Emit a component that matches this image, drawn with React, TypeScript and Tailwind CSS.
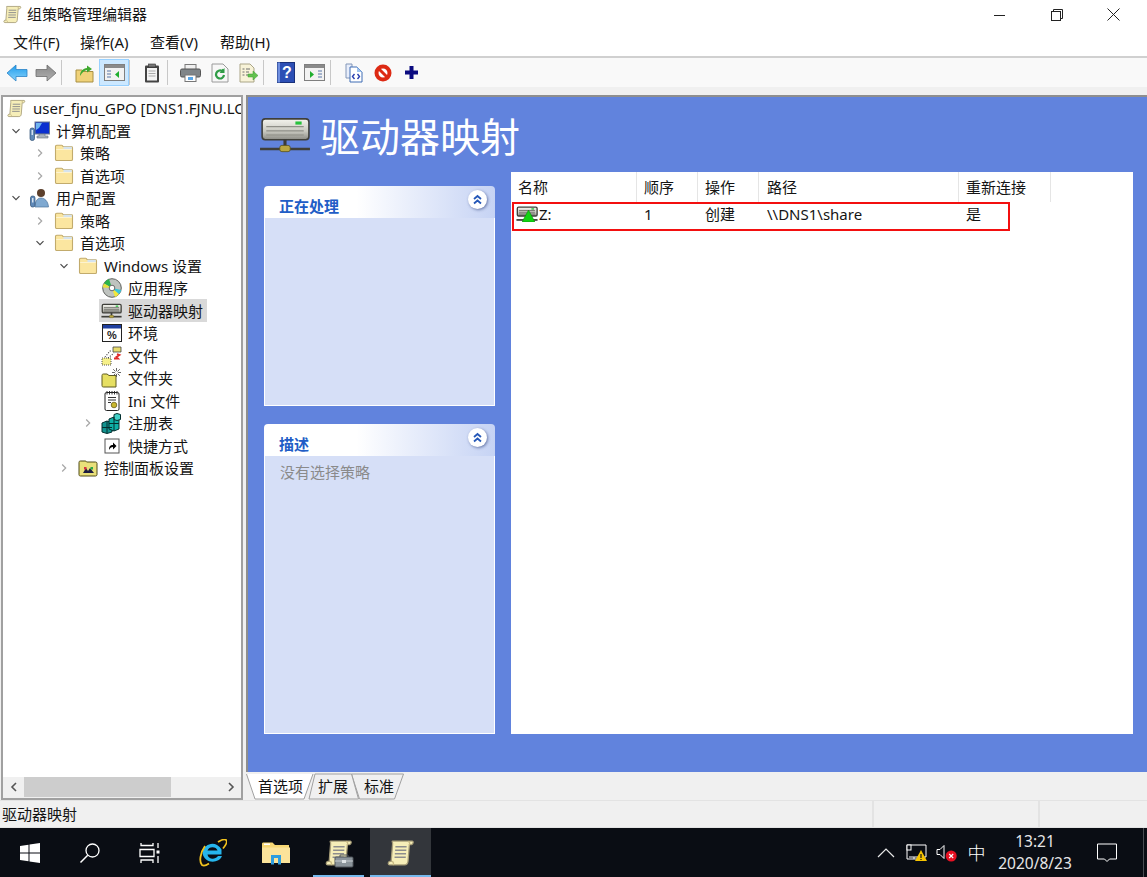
import React from "react";

const Scroll = ({ s = 20 }: { s?: number }) => (
  <svg width={s} height={s} viewBox="0 0 20 20" className="shrink-0">
    <path d="M4 1.500h14c1 0 1 2-.5 2.500H16L15 16c-.2 1.600-1 2.500-2.500 2.500H2c-1.400 0-1.600-2 0-2.500h1L4 3.500C4.100 2.300 3.300 1.500 4 1.500z" fill="#f6eeb8" stroke="#a79d78" strokeWidth="0.900" />
    <path d="M6 5.500h8M5.800 8h8M5.600 10.500h8M5.400 13h8" stroke="#8d8d8d" strokeWidth="1" />
    <path d="M15 1.700c1.500.5 1.500 1.800.8 2.600M3.500 16c1.400.5 1.400 1.800.6 2.500" stroke="#c9bb85" fill="none" strokeWidth="1" />
  </svg>
);

const Folder = () => (
  <svg width="20" height="18" viewBox="0 0 20 18" className="shrink-0">
    <path d="M1.500 4V2.500c0-.8.500-1.200 1.200-1.200h5c.7 0 1 .4 1.300 1.200h8.300c.7 0 1.200.4 1.200 1.200v11.500c0 .8-.5 1.300-1.200 1.300H2.700c-.7 0-1.200-.5-1.200-1.300z" fill="#fbe6a0" stroke="#c2ab6c" strokeWidth="1.100" />
    <path d="M9.500 2.600h8.300v2.400H9.500z" fill="#d5e3ee" />
    <path d="M2.200 5.500h15.600" stroke="#fdf3cf" strokeWidth="1" />
  </svg>
);

const Drive = ({ w = 22, h = 16, small }: { w?: number; h?: number; small?: boolean }) => (
  <svg width={w} height={h} viewBox="0 0 50 34" className="shrink-0">
    <defs>
      <linearGradient id="drv" x1="0" y1="0" x2="0" y2="1">
        <stop offset="0" stopColor="#f4f4ee" />
        <stop offset="0.6" stopColor="#c8c8c0" />
        <stop offset="1" stopColor="#8b8b85" />
      </linearGradient>
    </defs>
    <rect x="3" y="1.500" width="45" height="20" rx="3" fill="url(#drv)" stroke="#3f3f3a" strokeWidth={small ? 3 : 1.500} />
    <path d="M7 9h36M7 13h36M7 17h36" stroke={small ? "#6c6c66" : "#8f8f88"} strokeWidth={small ? 2 : 1.200} />
    <rect x="35" y="4" width="6" height="3" fill="#27c23d" />
    <path d="M25 21v9" stroke="#3c3c38" strokeWidth={small ? 4 : 3} />
    <path d="M1 30.500h48" stroke="#3f3f3a" strokeWidth={small ? 4 : 2.500} />
    <rect x="20" y="27" width="10" height="6" rx="2" fill="#b9a640" stroke="#5a5220" strokeWidth="0.800" />
  </svg>
);

const Computer = () => (
  <svg width="21" height="20" viewBox="0 0 21 20" className="shrink-0">
    <rect x="6" y="1" width="14.500" height="12" fill="#0a2fd0" stroke="#6d7a8f" />
    <path d="M7 2h6l-3 5-3 2z" fill="#6fb4ee" />
    <path d="M10 13h6v2h3v2H8v-2h2z" fill="#a8b2bd" stroke="#67717d" strokeWidth="0.600" />
    <rect x="1" y="7" width="4.500" height="12.500" rx="2" fill="#5f89b8" stroke="#2d4d72" strokeWidth="0.700" />
    <rect x="2.600" y="9" width="1.300" height="5" fill="#e5eef7" />
  </svg>
);

const UserIcon = () => (
  <svg width="21" height="20" viewBox="0 0 21 20" className="shrink-0">
    <circle cx="12" cy="5" r="4" fill="#5c3f2b" />
    <path d="M6 19c0-6 2.500-9 6-9s7 3 7.500 9z" fill="#7fa9d1" stroke="#4b739c" strokeWidth="0.700" />
    <rect x="1.500" y="8" width="4.500" height="11" rx="2" fill="#5f89b8" stroke="#2d4d72" strokeWidth="0.700" />
    <rect x="3.100" y="10" width="1.300" height="4.500" fill="#e5eef7" />
  </svg>
);

const Cd = () => (
  <svg width="20" height="20" viewBox="0 0 20 20" className="shrink-0">
    <circle cx="10" cy="10" r="9.300" fill="#bfc3bf" stroke="#5f615e" />
    <path d="M10 10L2 5.500a9 9 0 0 1 5-4.500z" fill="#2bb34a" />
    <path d="M10 10L2 5.500a9 9 0 0 0-1.300 4z" fill="#e8e23a" />
    <path d="M10 10l3 9a9 9 0 0 0 4-3z" fill="#f2e83a" />
    <path d="M10 10l7 6a9 9 0 0 0 2.300-4z" fill="#39c6d8" />
    <circle cx="10" cy="10" r="2.800" fill="#fff" stroke="#6a6a6a" />
  </svg>
);

const EnvIcon = () => (
  <svg width="20" height="18" viewBox="0 0 20 18" className="shrink-0">
    <rect x="0.500" y="0.500" width="19" height="17" fill="#fff" stroke="#222" />
    <rect x="1" y="1" width="18" height="3.500" fill="#1f3f9f" />
    <text x="10" y="15" textAnchor="middle" fontSize="11" fontWeight="700" fontFamily="Liberation Sans" fill="#222">%</text>
  </svg>
);

const FileSpark = () => (
  <svg width="21" height="20" viewBox="0 0 21 20" className="shrink-0">
    <path d="M12 1h8v5h-8z" fill="#e8dc6c" stroke="#444" strokeWidth="0.800" />
    <path d="M1 12h9v7H1z" fill="#f6f08a" stroke="#444" strokeWidth="0.900" strokeDasharray="1 1" />
    <path d="M4 11l6-7M7 12l6-5" stroke="#333" strokeWidth="1.100" strokeDasharray="1 1.500" />
    <path d="M16 8l2.500 1-3 2 1.500 1.500h-4" stroke="#e02a2a" strokeWidth="1.800" fill="none" />
  </svg>
);

const FolderSpark = () => (
  <svg width="21" height="20" viewBox="0 0 21 20" className="shrink-0">
    <path d="M1 7.500C1 6.500 1.600 6 2.300 6H6L8 7.500h7V19H2.300C1.500 19 1 18.500 1 17.500z" fill="#e6df62" stroke="#5f5b20" strokeWidth="1" />
    <path d="M15.500 0v9M11 4.500h9M12.200 1.200l6.600 6.600M18.800 1.200l-6.600 6.600" stroke="#555" strokeWidth="0.900" />
    <circle cx="15.500" cy="4.500" r="1.600" fill="#fff" />
  </svg>
);

const IniIcon = () => (
  <svg width="18" height="21" viewBox="0 0 18 21" className="shrink-0">
    <rect x="2" y="2.500" width="14" height="18" rx="1.500" fill="#fff" stroke="#222" />
    <path d="M4 1v3.500M6.500 1v3.500M9 1v3.500M11.500 1v3.500M14 1v3.500" stroke="#222" strokeWidth="0.900" />
    <path d="M5 7.500h8M5 10h8M5 12.500h3" stroke="#333" strokeWidth="1" />
    <circle cx="11" cy="15" r="2.800" fill="#c9b72e" stroke="#5a4e10" strokeWidth="0.700" />
  </svg>
);

const Registry = () => (
  <svg width="21" height="21" viewBox="0 0 21 21" className="shrink-0">
    <path d="M1 10l5-2 5 2v9l-5 1.500L1 19z" fill="#11938f" stroke="#042f2f" strokeWidth="1" />
    <path d="M8 6l5-2 5 2v10l-5 2-5-2z" fill="#0fb0a6" stroke="#042f2f" strokeWidth="1" />
    <path d="M13 1.500l3-1 3.500 1v5l-3.500 1-3-1z" fill="#43d1c8" stroke="#042f2f" strokeWidth="1" />
    <path d="M1 14.500h10M6 8v12M8 10.500h10M13 4v14" stroke="#042f2f" strokeWidth="1" />
  </svg>
);

const Shortcut = () => (
  <svg width="16" height="16" viewBox="0 0 16 16" className="shrink-0">
    <rect x="1" y="1" width="14" height="14" fill="#fff" stroke="#555" />
    <path d="M5 12c0-3.500 1-5 4-5V4.500l3.500 3.500L9 11.500V9c-1.800 0-3 1-4 3z" fill="#000" />
  </svg>
);

const PanelFolder = () => (
  <svg width="20" height="18" viewBox="0 0 20 18" className="shrink-0">
    <path d="M1 3.500C1 2.500 1.500 2 2.300 2h5c.8 0 1 .5 1.300 1H17.500c.8 0 1.500.5 1.500 1.300v11.400c0 .8-.7 1.300-1.500 1.300h-15C1.700 17 1 16.500 1 15.700z" fill="#e9e07a" stroke="#4f4a18" />
    <path d="M5 14l3-5 2 3 2-3 4 5z" fill="#1c1c40" />
    <rect x="6" y="8" width="2.500" height="2.500" fill="#d9303f" />
    <rect x="12.500" y="8" width="2.500" height="2.500" fill="#2ba84a" />
  </svg>
);

const Chevron = ({ open }: { open: boolean }) => (
  <svg width="12" height="12" viewBox="0 0 12 12" className="shrink-0">
    {open ? (
      <path d="M2.500 4.200L6 7.700l3.500-3.500" fill="none" stroke="#4a4a4a" strokeWidth="1.200" />
    ) : (
      <path d="M4.200 2.500L7.700 6l-3.500 3.500" fill="none" stroke="#a6a6a6" strokeWidth="1.200" />
    )}
  </svg>
);

const LEVEL = ["pl-[1px]", "pl-[7px]", "pl-[31px]", "pl-[55px]", "pl-[79px]"];

const Row = ({ level, chev, icon, label, selected }: { level: number; chev?: "o" | "c"; icon: React.ReactNode; label: string; selected?: boolean }) => (
  <div className={`flex items-center h-[22.5px] whitespace-nowrap ${LEVEL[level]}`}>
    {level > 0 && (
      <span className="w-[12px] mr-[5px] shrink-0 flex items-center">{chev ? <Chevron open={chev === "o"} /> : null}</span>
    )}
    <span className={`flex items-center h-[23px] pl-[2px] pr-[4px] ${selected ? "bg-[#d9d9d9]" : ""}`}>
      <span className="w-[21px] flex justify-center shrink-0">{icon}</span>
      <span className="ml-[6px]">{label}</span>
    </span>
  </div>
);

const Arrow = ({ left, a, b, line }: { left?: boolean; a: string; b: string; line: string }) => (
  <svg width="22" height="18" viewBox="0 0 22 18">
    <defs>
      <linearGradient id={a.slice(1)} x1="0" y1="0" x2="0" y2="1">
        <stop offset="0" stopColor={a} />
        <stop offset="1" stopColor={b} />
      </linearGradient>
    </defs>
    <path d={left ? "M1 9l9-8v4.500h11v7H10V17z" : "M21 9l-9-8v4.500H1v7h11V17z"} fill={`url(#${a.slice(1)})`} stroke={line} strokeWidth="0.800" />
  </svg>
);

const Btn = ({ children, active }: { children: React.ReactNode; active?: boolean }) => (
  <div className={`h-[27px] flex items-center justify-center shrink-0 ${active ? "w-[30px] bg-[#cce8ff] border border-[#99d1ff]" : "w-[29px]"}`}>{children}</div>
);
const Sep = ({ tight }: { tight?: boolean }) => (
  <div className={`w-px h-[25px] bg-[#c8c8c8] shrink-0 ${tight ? "mr-[7px]" : "ml-px mr-[8px]"}`} />
);

const WinIcon = ({ flip }: { flip?: boolean }) => (
  <svg width="21" height="17" viewBox="0 0 21 17">
    <rect x="0.500" y="0.500" width="20" height="16" fill="#f2f2f2" stroke="#7f7f7f" />
    <rect x="1" y="1" width="19" height="3" fill="#8a8a8a" />
    {flip ? (
      <>
        <path d="M6 7v7l4-3.500z" fill="#1fae2e" />
        <path d="M14 7h4M14 10h4M14 13h4" stroke="#5877a8" strokeWidth="1.200" />
      </>
    ) : (
      <>
        <path d="M3 7h4M3 10h4M3 13h4" stroke="#5877a8" strokeWidth="1.200" />
        <path d="M15 7v7l-4-3.500z" fill="#1fae2e" />
      </>
    )}
  </svg>
);

const Toolbar = () => (
  <div className="h-[29px] bg-[#f9f9f9] flex items-center pl-[2px] shrink-0">
    <Btn><Arrow left a="#1c9bec" b="#8ad3fb" line="#2b83c6" /></Btn>
    <Btn><Arrow a="#8a8a8a" b="#b0b0b0" line="#6d6d6d" /></Btn>
    <Sep />
    <Btn>
      <svg width="19" height="20" viewBox="0 0 19 20">
        <path d="M1 7h6l1.500 1.500H18V19H1z" fill="#f0d279" stroke="#a89044" />
        <path d="M5 13c0-5 3-7.500 7-8V2.500L17 6l-5 3.500V7c-3 .5-5 2.500-7 6z" fill="#3fa92f" />
      </svg>
    </Btn>
    <Btn active><WinIcon /></Btn>
    <Sep tight />
    <Btn>
      <svg width="16" height="20" viewBox="0 0 16 20">
        <rect x="1" y="2.500" width="14" height="17" rx="1" fill="#444" />
        <rect x="3" y="5" width="10" height="12.500" fill="#f4f4f4" />
        <rect x="4.500" y="1" width="7" height="3" fill="#777" stroke="#333" strokeWidth="0.600" />
        <path d="M4.500 8h7M4.500 10.500h7M4.500 13h7" stroke="#aaa" strokeWidth="1" />
      </svg>
    </Btn>
    <Sep />
    <Btn>
      <svg width="21" height="18" viewBox="0 0 21 18">
        <rect x="5" y="0.500" width="11" height="6" fill="#f0f0f0" stroke="#7a7a7a" />
        <rect x="0.500" y="5" width="20" height="8" rx="1.500" fill="#7f8589" stroke="#555" />
        <rect x="5" y="11" width="11" height="6.500" fill="#fff" stroke="#777" />
        <rect x="8" y="13" width="5" height="3" fill="#5aa7e8" />
      </svg>
    </Btn>
    <Btn>
      <svg width="18" height="20" viewBox="0 0 18 20">
        <path d="M1 1h11l5 5v13H1z" fill="#f7f7f7" stroke="#9a9a9a" />
        <path d="M12.500 6.500l-1.500 1.500A4 4 0 1 0 13 12" fill="none" stroke="#2f9c46" strokeWidth="2.200" />
        <path d="M13.500 5v5h-5z" fill="#2f9c46" />
      </svg>
    </Btn>
    <Btn>
      <svg width="20" height="20" viewBox="0 0 20 20">
        <path d="M1 1h10l4 4v14H1z" fill="#f8f3d8" stroke="#aaa587" />
        <path d="M3.500 6h2M7 6h4M3.500 9h2M7 9h3M3.500 12h2M7 12h2" stroke="#6e6e6e" strokeWidth="1" />
        <path d="M9 11h5V8l5 4.500-5 4.500v-3H9z" fill="#62c14e" stroke="#3d9c30" strokeWidth="0.500" />
      </svg>
    </Btn>
    <Sep tight />
    <Btn>
      <svg width="18" height="21" viewBox="0 0 18 21">
        <rect x="0.500" y="0.500" width="17" height="20" fill="#2c4fb5" stroke="#19307a" />
        <rect x="0.500" y="0.500" width="2.500" height="20" fill="#6f8fe0" />
        <text x="10" y="16" textAnchor="middle" fontSize="16" fontWeight="700" fontFamily="Liberation Sans" fill="#fff">?</text>
      </svg>
    </Btn>
    <Btn><WinIcon flip /></Btn>
    <Sep />
    <Btn>
      <svg width="18" height="20" viewBox="0 0 18 20">
        <path d="M1 1h6v14H1z" fill="#e8eefb" stroke="#8296b8" />
        <path d="M5 4h7l5 5v10H5z" fill="#fff" stroke="#3e6db4" />
        <path d="M12 4l5 5h-5z" fill="#9fc3ee" />
        <path d="M9.500 11l-2 2.500 2 2.500M12.500 11l2 2.500-2 2.500" fill="none" stroke="#2a3fb0" strokeWidth="1.400" />
      </svg>
    </Btn>
    <Btn>
      <svg width="18" height="18" viewBox="0 0 18 18">
        <circle cx="9" cy="9" r="6.500" fill="#fff" stroke="#dd2a14" strokeWidth="4" />
        <path d="M4.500 4.500l9 9" stroke="#dd2a14" strokeWidth="3" />
      </svg>
    </Btn>
    <Btn>
      <svg width="13" height="13" viewBox="0 0 13 13">
        <path d="M4.500 0h4v4.500H13v4H8.500V13h-4V8.500H0v-4h4.500z" fill="#0b0b80" />
      </svg>
    </Btn>
  </div>
);

const Collapse = () => (
  <span className="absolute right-[8px] top-[4px] w-[19px] h-[19px] rounded-full bg-white shadow-[1px_1px_3px_rgba(40,60,120,0.6)] flex items-center justify-center">
    <svg width="11" height="11" viewBox="0 0 11 11">
      <path d="M2 5l3.500-3L9 5M2 9.500l3.500-3 3.500 3" fill="none" stroke="#2457b8" strokeWidth="1.800" />
    </svg>
  </span>
);

const Card = ({ title, grow, children }: { title: string; grow?: boolean; children?: React.ReactNode }) => (
  <div className={`flex flex-col ${grow ? "flex-1" : "h-[220px]"}`}>
    <div className="relative h-[32px] rounded-t-[4px] bg-gradient-to-r from-white from-40% to-[#c6d3f4] flex items-end pl-[15px] font-bold text-[#215dc6] leading-[24px] shrink-0">
      {title}
      <Collapse />
    </div>
    <div className="flex-1 bg-[#d6dff7] border-x border-b border-white pl-[15px] pt-[4px] text-[#8a8a8a] leading-[24px]">{children}</div>
  </div>
);

const Tabs = () => (
  <div className="relative h-[28px] flex items-center shrink-0">
    <svg width="170" height="28" viewBox="0 0 170 28" className="absolute left-0 top-0">
      <path d="M105.500 2l8 25h35l9-25z" fill="#f0f0f0" stroke="#a0a0a0" />
      <path d="M63 27l6-25h36.500l7 25z" fill="#f0f0f0" stroke="#a0a0a0" />
      <path d="M0.500 2L9 27h49l9-25" fill="#fff" stroke="#a0a0a0" />
    </svg>
    <span className="relative ml-[12px]">首选项</span>
    <span className="relative ml-[15px]">扩展</span>
    <span className="relative ml-[16px]">标准</span>
  </div>
);

const Main = () => (
  <div className="flex-1 flex flex-col bg-[#6183dd] border-t-2 border-l-2 border-[#8e8e8e] min-h-0">
    <div className="h-[75px] flex items-center pl-[11px] shrink-0">
      <Drive w={52} h={36} />
      <span className="ml-[9px] mt-[4px] text-[40px] leading-[50px] text-white">驱动器映射</span>
    </div>
    <div className="flex-1 flex pb-[38px] pr-[14px] min-h-0">
      <div className="ml-[16px] w-[231px] pt-[14px] flex flex-col gap-[18px] shrink-0">
        <Card title="正在处理" />
        <Card title="描述" grow>没有选择策略</Card>
      </div>
      <div className="ml-[16px] flex-1 bg-white">
        <div className="h-[30px] flex items-center">
          <span className="w-[126px] pl-[7px] h-full flex items-center border-r border-[#e5e5e5]">名称</span>
          <span className="w-[61px] pl-[7px] h-full flex items-center border-r border-[#e5e5e5]">顺序</span>
          <span className="w-[61px] pl-[7px] h-full flex items-center border-r border-[#e5e5e5]">操作</span>
          <span className="w-[200px] pl-[8px] h-full flex items-center border-r border-[#e5e5e5]">路径</span>
          <span className="w-[92px] pl-[7px] h-full flex items-center border-r border-[#e5e5e5]">重新连接</span>
        </div>
        <div className="ml-px w-[498px] h-[29px] border-2 border-[#f30f0f] flex items-center pb-[5px]">
          <span className="w-[122px] pl-[2px] flex items-center">
            <span className="relative w-[22px] h-[16px] shrink-0">
              <Drive w={22} h={16} small />
              <svg width="13" height="12" viewBox="0 0 13 12" className="absolute left-[6px] top-[4px]">
                <path d="M6.500 0L13 12H0z" fill="#12d312" stroke="#0a7a0a" strokeWidth="0.500" />
              </svg>
            </span>
            <span className="ml-px">Z:</span>
          </span>
          <span className="w-[61px] pl-[8px]">1</span>
          <span className="w-[61px] pl-[8px]">创建</span>
          <span className="w-[200px] pl-[9px]">\\DNS1\share</span>
          <span className="pl-[8px]">是</span>
        </div>
      </div>
    </div>
  </div>
);

const Taskbar = () => (
  <div className="h-[49px] bg-[#0a0d14] flex items-stretch text-white shrink-0">
    <div className="w-[60px] flex items-center justify-center">
      <svg width="20" height="20" viewBox="0 0 20 20">
        <path d="M0 3l8.500-1.200v7.700H0zM9.500 1.600L20 0v9.500H9.500zM0 10.500h8.500v7.700L0 17zM9.500 10.500H20V20l-10.500-1.500z" fill="#fff" />
      </svg>
    </div>
    <div className="w-[60px] flex items-center justify-center">
      <svg width="22" height="22" viewBox="0 0 22 22">
        <circle cx="13.500" cy="8.500" r="6.500" fill="none" stroke="#fff" strokeWidth="1.300" />
        <path d="M8.700 13.300L1.500 20.500" stroke="#fff" strokeWidth="1.500" />
      </svg>
    </div>
    <div className="w-[60px] flex items-center justify-center">
      <svg width="22" height="20" viewBox="0 0 22 20">
        <path d="M2 0v2.500h12V0M1 6.500h14v7H1zM2 20v-3h12v3" fill="none" stroke="#fff" strokeWidth="1.300" />
        <path d="M19 0v5" stroke="#fff" strokeWidth="1.300" />
        <rect x="17.500" y="7.500" width="3" height="3" fill="#fff" />
        <path d="M19 13v7" stroke="#fff" strokeWidth="1.300" />
      </svg>
    </div>
    <div className="w-[65px] flex items-center justify-center">
      <svg width="28" height="28" viewBox="0 0 28 28">
        <path d="M3.500 14a10 10 0 0 1 19-3.500v5H8.500c.5 4.500 7 6 10.500 1.500h4c-3 8-18 8-19.500-3z" fill="#26b5ec" />
        <path d="M8.500 11.500h10c-1-4.500-9-4.500-10 0z" fill="#0a0d14" />
        <path d="M6 7C1 14 0 23 3 26c1.500 1 4 .500 7-1.500M19 3c4-2.500 7.500-3 8.500-1.500 1 2-1 5-3.500 8" fill="none" stroke="#f2c21e" strokeWidth="1.800" />
      </svg>
    </div>
    <div className="w-[62px] flex items-center justify-center">
      <svg width="28" height="24" viewBox="0 0 28 24">
        <path d="M0 3c0-1 .5-1.500 1.500-1.500h9L13 4h14v18H1c-.6 0-1-.5-1-1z" fill="#f7d774" />
        <path d="M0 6.500h28V22H1c-.6 0-1-.5-1-1z" fill="#fbe39a" />
        <path d="M2 2.500h6v1.500H2z" fill="#fff" />
        <path d="M9 23.500V14h10v9.500h-3V17h-4v6.500z" fill="#2d9ddf" />
      </svg>
    </div>
    <div className="w-[63px] relative flex items-center justify-center">
      <span className="relative flex">
        <Scroll s={28} />
        <svg width="20" height="14" viewBox="0 0 20 14" className="absolute left-[9px] top-[15px]">
          <rect x="1" y="3" width="18" height="10" rx="1" fill="#8b949b" stroke="#4e555b" />
          <path d="M6 3V1h8v2" fill="none" stroke="#4e555b" />
          <path d="M1 7h18" stroke="#c5cbd0" />
          <rect x="8" y="6" width="4" height="3" fill="#dfe3e6" />
        </svg>
      </span>
      <span className="absolute left-[6px] right-[6px] bottom-0 h-[2px] bg-[#76b9ed]" />
    </div>
    <div className="w-[61px] relative flex items-center justify-center bg-[#33363b]">
      <Scroll s={28} />
      <span className="absolute left-0 right-0 bottom-0 h-[2px] bg-[#76b9ed]" />
    </div>
    <div className="flex-1" />
    <div className="w-[30px] flex items-center justify-center">
      <svg width="18" height="10" viewBox="0 0 18 10"><path d="M1 9l8-8 8 8" fill="none" stroke="#e8e8e8" strokeWidth="1.200" /></svg>
    </div>
    <div className="w-[30px] flex items-center justify-center">
      <svg width="21" height="18" viewBox="0 0 21 18">
        <path d="M1 1h19v12H3M1 1v14M1 15h12M8 13v2" fill="none" stroke="#fff" strokeWidth="1" />
        <rect x="1" y="1" width="4" height="5" fill="#0a0d14" stroke="#fff" strokeWidth="1" />
        <path d="M15 6l6 11H9z" fill="#f7c400" />
        <path d="M15 10v4M15 15v1" stroke="#111" strokeWidth="1.200" />
      </svg>
    </div>
    <div className="w-[31px] flex items-center justify-center">
      <svg width="21" height="18" viewBox="0 0 21 18">
        <path d="M1 5.500h3l4-4v13l-4-4H1z" fill="none" stroke="#fff" strokeWidth="1" />
        <circle cx="15.200" cy="12" r="5.500" fill="#e81123" />
        <path d="M13.200 10l4 4M17.200 10l-4 4" stroke="#fff" strokeWidth="1.100" />
      </svg>
    </div>
    <div className="w-[29px] flex items-center justify-center text-[18px] font-light font-['Noto_Sans_CJK_SC',sans-serif] text-white">中</div>
    <div className="w-[88px] flex flex-col items-center justify-center text-[15.5px] leading-[22px] text-[#e6e6e6] pb-px">
      <span>13:21</span>
      <span>2020/8/23</span>
    </div>
    <div className="w-[56px] flex items-center justify-center">
      <svg width="20" height="20" viewBox="0 0 20 20">
        <path d="M0.500 1h19v15h-7l-2.500 2.500L7.500 16h-7z" fill="none" stroke="#fff" strokeWidth="1" />
      </svg>
    </div>
    <div className="w-[8px]" />
    <div className="w-[4px] border-l border-[#4a4d52]" />
  </div>
);

export default function App() {
  return (
    <div className="w-[1147px] h-[877px] overflow-hidden flex flex-col bg-[#f0f0f0] text-[15px] text-[#141414] font-['Noto_Sans','Noto_Sans_CJK_SC',sans-serif]">
      <div className="h-[29px] bg-white flex items-center pl-[3px] shrink-0">
        <Scroll s={19} />
        <span className="ml-[5px]">组策略管理编辑器</span>
        <div className="ml-auto flex items-center h-full">
          <div className="w-[57px] flex justify-center">
            <svg width="12" height="12" viewBox="0 0 12 12"><path d="M0 6.500h11" stroke="#222" /></svg>
          </div>
          <div className="w-[57px] flex justify-center">
            <svg width="12" height="12" viewBox="0 0 12 12" fill="none" stroke="#222"><path d="M2.500 2.500V.5h9v9h-2" /><rect x="0.500" y="2.500" width="9" height="9" /></svg>
          </div>
          <div className="w-[57px] flex justify-center">
            <svg width="13" height="13" viewBox="0 0 13 13"><path d="M.5.500l12 12M12.500.5l-12 12" stroke="#222" /></svg>
          </div>
          <div className="w-[5px]" />
        </div>
      </div>
      <div className="h-[29px] bg-white flex items-center pl-[13px] shrink-0 border-b-2 border-[#d0d0d0]">
        <span className="w-[67px]">文件(F)</span>
        <span className="w-[70px]">操作(A)</span>
        <span className="w-[70px]">查看(V)</span>
        <span>帮助(H)</span>
      </div>
      <Toolbar />
      <div className="flex-1 flex pt-[8px] min-h-0">
        <div className="ml-px w-[242px] flex flex-col border-2 border-[#a0a0a0] bg-white shrink-0">
          <div className="flex-1 overflow-hidden">
            <Row level={0} icon={<Scroll s={19} />} label="user_fjnu_GPO [DNS1.FJNU.LOCAL]" />
            <Row level={1} chev="o" icon={<Computer />} label="计算机配置" />
            <Row level={2} chev="c" icon={<Folder />} label="策略" />
            <Row level={2} chev="c" icon={<Folder />} label="首选项" />
            <Row level={1} chev="o" icon={<UserIcon />} label="用户配置" />
            <Row level={2} chev="c" icon={<Folder />} label="策略" />
            <Row level={2} chev="o" icon={<Folder />} label="首选项" />
            <Row level={3} chev="o" icon={<Folder />} label="Windows 设置" />
            <Row level={4} icon={<Cd />} label="应用程序" />
            <Row level={4} icon={<Drive w={21} h={16} small />} label="驱动器映射" selected />
            <Row level={4} icon={<EnvIcon />} label="环境" />
            <Row level={4} icon={<FileSpark />} label="文件" />
            <Row level={4} icon={<FolderSpark />} label="文件夹" />
            <Row level={4} icon={<IniIcon />} label="Ini 文件" />
            <Row level={4} chev="c" icon={<Registry />} label="注册表" />
            <Row level={4} icon={<Shortcut />} label="快捷方式" />
            <Row level={3} chev="c" icon={<PanelFolder />} label="控制面板设置" />
          </div>
          <div className="h-[21px] bg-[#f0f0f0] flex items-start shrink-0">
            <span className="w-[21px] h-[20px] flex items-center justify-center">
              <svg width="8" height="10" viewBox="0 0 8 10"><path d="M6 1L2 5l4 4" fill="none" stroke="#555" strokeWidth="1.600" /></svg>
            </span>
            <span className="w-[147px] h-[20px] bg-[#cdcdcd]" />
            <span className="flex-1" />
            <span className="w-[21px] h-[20px] flex items-center justify-center">
              <svg width="8" height="10" viewBox="0 0 8 10"><path d="M2 1l4 4-4 4" fill="none" stroke="#555" strokeWidth="1.600" /></svg>
            </span>
          </div>
        </div>
        <div className="ml-[3px] flex-1 flex flex-col min-w-0">
          <Main />
          <Tabs />
        </div>
      </div>
      <div className="h-[28px] flex items-center border-y border-[#e3e3e3] shrink-0">
        <span className="pl-[2px] w-[872px]">驱动器映射</span>
        <span className="w-[166px] h-full border-l-2 border-[#e3e3e3]" />
        <span className="h-full border-l-2 border-[#e3e3e3]" />
      </div>
      <Taskbar />
    </div>
  );
}
